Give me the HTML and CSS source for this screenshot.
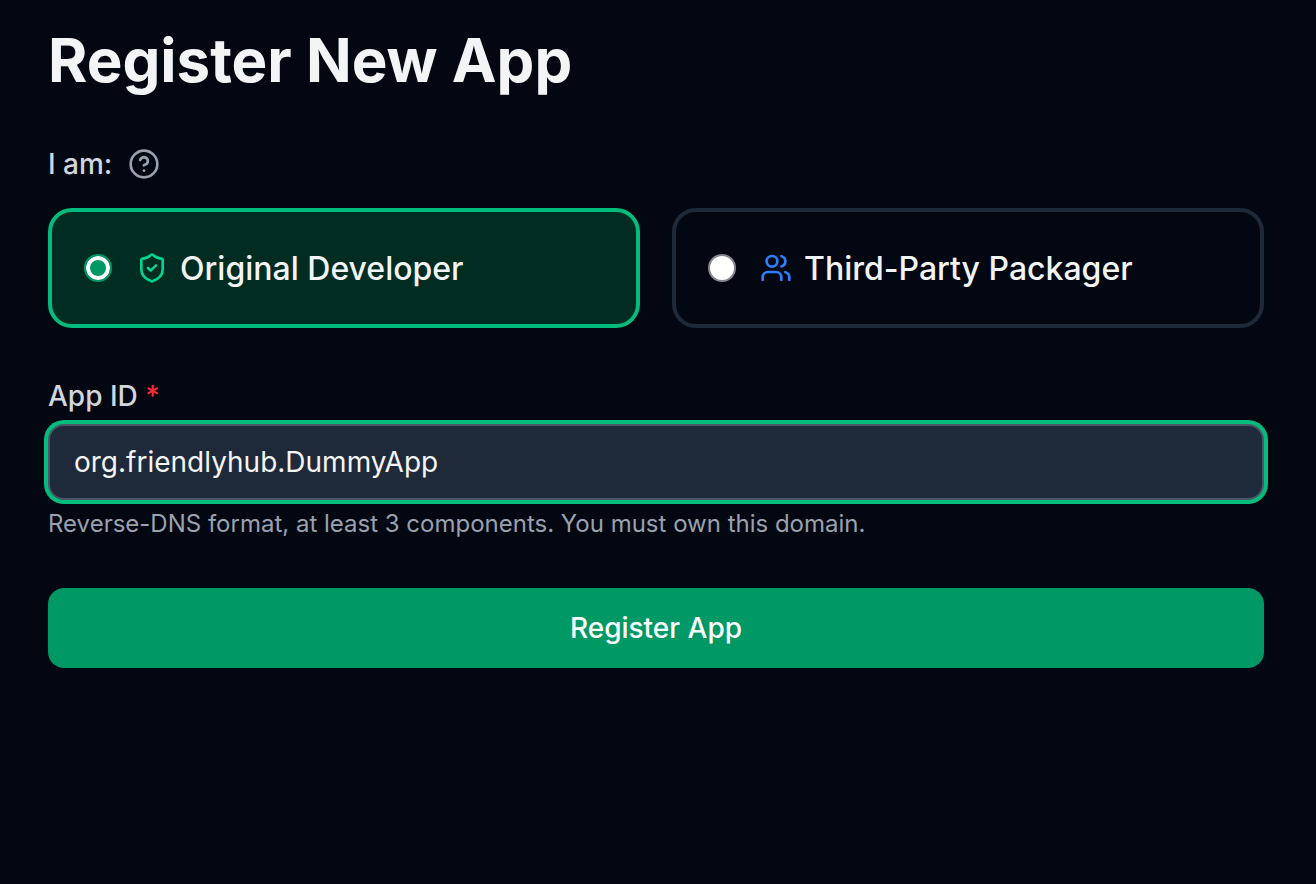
FILE: index.html
```html
<!DOCTYPE html>
<html lang="en">

<head>
    <meta charset="UTF-8">
    <meta name="viewport" content="width=device-width, initial-scale=1.0">
    <title>Register New App</title>
    <link rel="stylesheet" href="styles.css">
</head>

<body>
    <main class="page">
        <h1>Register New App</h1>
        <form class="register">
            <div class="role-label">
                <span id="role">I am:</span>
                <button type="button" class="help" aria-label="Help">
                    <svg viewBox="0 0 24 24">
                        <circle cx="12" cy="12" r="10" />
                        <path d="M9.09 9a3 3 0 0 1 5.83 1c0 2-3 3-3 3" />
                        <path d="M12 17h.01" />
                    </svg>
                </button>
            </div>
            <div class="roles" role="radiogroup" aria-labelledby="role">
                <label class="card">
                    <input type="radio" name="role" value="developer" checked>
                    <svg class="shield" viewBox="0 0 24 24">
                        <path d="M20 13c0 5-3.5 7.5-7.66 8.95a1 1 0 0 1-.67-.01C7.5 20.5 4 18 4 13V6a1 1 0 0 1 1-1c2 0 4.5-1.2 6.24-2.72a1.17 1.17 0 0 1 1.52 0C14.51 3.81 17 5 19 5a1 1 0 0 1 1 1z" />
                        <path d="m9 12 2 2 4-4" />
                    </svg>
                    <span>Original Developer</span>
                </label>
                <label class="card">
                    <input type="radio" name="role" value="packager">
                    <svg class="users" viewBox="0 0 24 24">
                        <path d="M16 21v-2a4 4 0 0 0-4-4H6a4 4 0 0 0-4 4v2" />
                        <circle cx="9" cy="7" r="4" />
                        <path d="M22 21v-2a4 4 0 0 0-3-3.87" />
                        <path d="M16 3.13a4 4 0 0 1 0 7.75" />
                    </svg>
                    <span>Third-Party Packager</span>
                </label>
            </div>
            <div class="field">
                <label for="appid">App ID <span class="required">*</span></label>
                <input type="text" id="appid" value="org.friendlyhub.DummyApp" spellcheck="false" required>
                <p class="hint">Reverse-DNS format, at least 3 components. You must own this domain.</p>
            </div>
            <button type="submit" class="submit">Register App</button>
        </form>
    </main>
</body>

</html>
```
FILE: styles.css
```css
* {
    box-sizing: border-box;
}

body {
    margin: 0;
    background-color: #030712;
    color: #f3f4f6;
    font-family: Inter, "Liberation Sans", sans-serif;
    font-size: 28px;
    line-height: 40px;
}

.page {
    padding: 24px 52px 48px 48px;
}

h1 {
    margin: 0 0 48px;
    font-size: 60px;
    line-height: 72px;
    font-weight: 700;
}

svg {
    width: 32px;
    height: 32px;
    flex-shrink: 0;
    fill: none;
    stroke: currentColor;
    stroke-width: 2;
    stroke-linecap: round;
    stroke-linejoin: round;
}

.role-label {
    display: flex;
    align-items: center;
    gap: 16px;
    margin-bottom: 24px;
    color: #d1d5dc;
    font-weight: 500;
}

.help {
    display: flex;
    padding: 0;
    border: 0;
    background: none;
    color: #99a1af;
    cursor: pointer;
}

.roles {
    display: grid;
    grid-template-columns: 1fr 1fr;
    gap: 32px;
    margin-bottom: 48px;
}

.card {
    display: flex;
    align-items: center;
    height: 120px;
    padding: 0 32px;
    border: 4px solid #1e2939;
    border-radius: 24px;
    font-size: 32px;
    line-height: 41px;
    font-weight: 500;
    cursor: pointer;
}

.card:has(input:checked) {
    border-color: #00bc7d;
    background-color: #002c22;
}

.card input {
    appearance: none;
    width: 28px;
    height: 28px;
    margin: 0 24px 0 0;
    border: 2px solid #85858f;
    border-radius: 50%;
    background-color: white;
}

.card input:checked {
    border-color: #009966;
    background-color: #009966;
    box-shadow: inset 0 0 0 4px white;
}

.card svg {
    margin-right: 12px;
}

.shield {
    color: #00d492;
}

.users {
    color: #2b7fff;
}

.field {
    margin-bottom: 48px;
}

.field label {
    display: block;
    margin-bottom: 8px;
    color: #d1d5dc;
    font-weight: 500;
}

.required {
    color: #fb2c36;
}

.field input {
    display: block;
    width: 100%;
    height: 76px;
    padding: 0 24px;
    border: 2px solid #4a5565;
    border-radius: 16px;
    outline: none;
    background-color: #1e2939;
    color: #f3f4f6;
    font: inherit;
    box-shadow: 0 0 0 4px #00bc7d;
}

.hint {
    margin: 8px 0 0;
    color: #99a1af;
    font-size: 24px;
    line-height: 32px;
}

.submit {
    display: block;
    width: 100%;
    height: 80px;
    border: 0;
    border-radius: 16px;
    background-color: #009966;
    color: white;
    font: inherit;
    font-weight: 500;
    cursor: pointer;
}

.submit:hover {
    background-color: #007a55;
}
```
